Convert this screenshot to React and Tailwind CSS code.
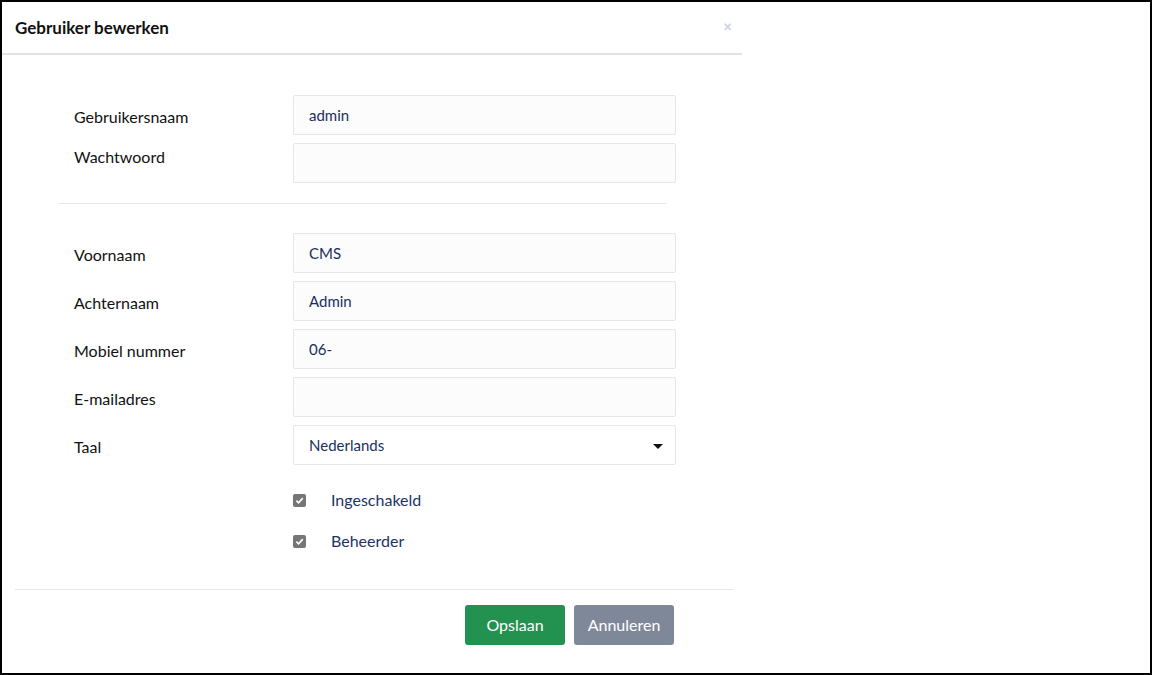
import React, { useState } from "react";

const font = { fontFamily: "Lato, 'Noto Sans', sans-serif" };

const TextRow = ({ label, value, labelPad = "pt-[10px]" }) => (
  <div className="flex">
    <label className={`w-[219px] shrink-0 text-[16px] text-[#111] ${labelPad}`}>{label}</label>
    <input
      type="text"
      defaultValue={value}
      className="h-[40px] w-[383px] rounded-[2px] border border-[#e6e6e6] bg-[#fcfcfc] px-[15px] text-[15px] text-[#1b2f5e] outline-none"
    />
  </div>
);

const Check = ({ label }) => (
  <label className="flex items-center">
    <span className="flex h-[13px] w-[13px] items-center justify-center rounded-[2px] bg-[#767676]">
      <svg width="9" height="9" viewBox="0 0 10 10">
        <path d="M1.5 5.2 L4 7.6 L8.6 2.4" fill="none" stroke="white" strokeWidth="1.8" />
      </svg>
    </span>
    <span className="ml-[25px] text-[16px] text-[#1c3366]">{label}</span>
  </label>
);

export default function App() {
  const [lang, setLang] = useState("nl");

  return (
    <div className="h-[675px] w-[1152px] border-2 border-black bg-white" style={font}>
      <div className="w-[740px]">
        <div className="flex h-[53px] items-center justify-between border-b-2 border-[#e2e2e2] pl-[13px] pr-[10px]">
          <h2 className="text-[17px] font-bold text-[#111]">Gebruiker bewerken</h2>
          <button className="mb-[3px] text-[15px] leading-none font-bold text-[#c9d1df]">×</button>
        </div>

        <div className="pl-[72px] pt-[40px]">
          <div className="flex flex-col gap-[8px]">
            <TextRow label="Gebruikersnaam" value="admin" />
            <TextRow label="Wachtwoord" value="" labelPad="pt-[2px]" />
          </div>
        </div>

        <div className="ml-[57px] mt-[20px] h-px w-[607px] bg-[#e6e6e6]" />

        <div className="pl-[72px] pt-[29px]">
          <div className="flex flex-col gap-[8px]">
            <TextRow label="Voornaam" value="CMS" />
            <TextRow label="Achternaam" value="Admin" />
            <TextRow label="Mobiel nummer" value="06-" />
            <TextRow label="E-mailadres" value="" />
            <div className="flex">
              <label className="w-[219px] shrink-0 pt-[10px] text-[16px] text-[#111]">Taal</label>
              <div className="relative">
                <select
                  value={lang}
                  onChange={(e) => setLang(e.target.value)}
                  className="h-[40px] w-[383px] appearance-none rounded-[2px] border border-[#e6e6e6] bg-white px-[15px] text-[15px] text-[#1b2f5e] outline-none"
                >
                  <option value="nl">Nederlands</option>
                  <option value="en">English</option>
                </select>
                <svg className="pointer-events-none absolute right-[13px] top-[19px]" width="10" height="5" viewBox="0 0 10 5">
                  <path d="M0 0 H10 L5 5 Z" fill="#111" />
                </svg>
              </div>
            </div>
          </div>

          <div className="ml-[219px] mt-[23px] flex flex-col gap-[17px]">
            <Check label="Ingeschakeld" />
            <Check label="Beheerder" />
          </div>
        </div>

        <div className="ml-[13px] mt-[36px] h-px w-[718px] bg-[#e6e6e6]" />

        <div className="flex justify-end gap-[9px] pr-[68px] pt-[15px]">
          <button className="h-[40px] w-[100px] rounded-[3px] bg-[#23914f] text-[16px] text-white">Opslaan</button>
          <button className="h-[40px] w-[100px] rounded-[3px] bg-[#7f8899] text-[16px] text-white">Annuleren</button>
        </div>
      </div>
    </div>
  );
}
